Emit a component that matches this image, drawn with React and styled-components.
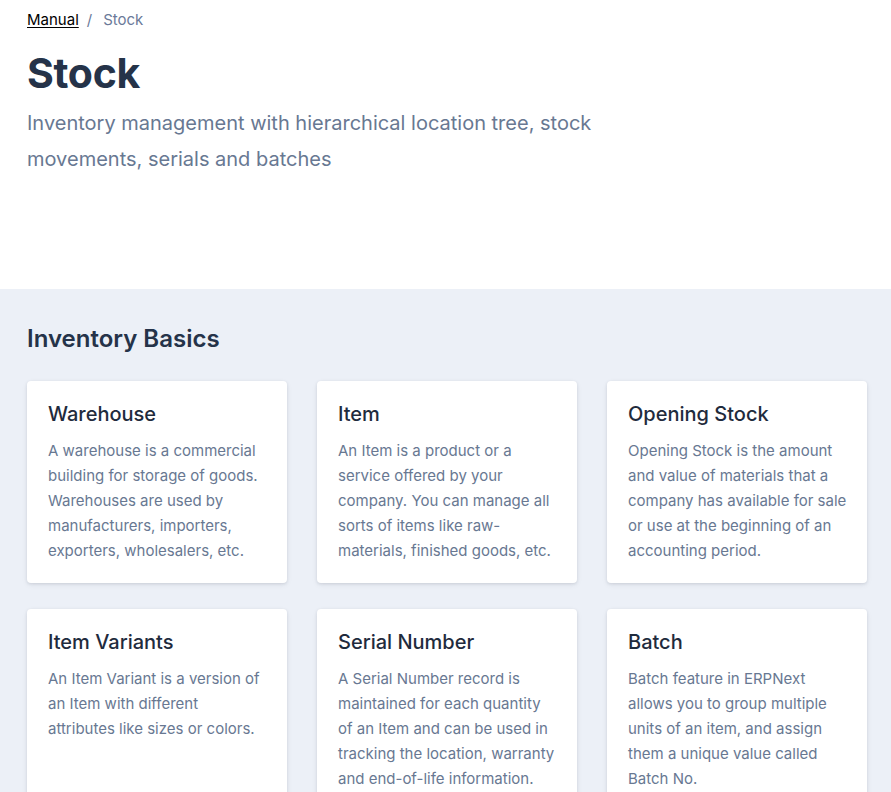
import React from "react";
import styled, { createGlobalStyle } from "styled-components";

const GlobalStyle = createGlobalStyle`
    body {
        margin: 0;
        background: #ffffff;
        font-family: Inter, "Noto Sans", sans-serif;
        -webkit-font-smoothing: antialiased;
    }
`;

const Hero = styled.header`
    padding: 9px 27px 112px;
    background: #ffffff;
`;

const Breadcrumb = styled.nav`
    display: flex;
    align-items: center;
    font-size: 15px;
    line-height: 22px;
    color: #6b7a99;
`;

const CrumbLink = styled.a`
    color: #000000;
    text-decoration: underline;
    text-underline-offset: 2px;
`;

const Separator = styled.span`
    margin: 0 11px 0 8px;
`;

const Title = styled.h1`
    margin: 18px 0 8px;
    font-size: 41px;
    line-height: 48px;
    font-weight: 700;
    color: #253349;
    letter-spacing: -0.3px;
`;

const Subtitle = styled.p`
    margin: 0;
    max-width: 600px;
    font-size: 20px;
    line-height: 36px;
    color: #687892;
`;

const Section = styled.section`
    background: #ecf0f7;
    padding: 34px 24px 40px 27px;
`;

const SectionTitle = styled.h2`
    margin: 0 0 26px;
    font-size: 24px;
    line-height: 32px;
    font-weight: 600;
    color: #253349;
`;

const Grid = styled.div`
    display: grid;
    grid-template-columns: repeat(3, 260px);
    column-gap: 30px;
    row-gap: 26px;
`;

const Card = styled.article`
    background: #ffffff;
    border-radius: 4px;
    padding: 20px 20px 20px 21px;
    box-shadow: 0 1px 3px rgba(31, 45, 61, 0.12), 0 2px 6px rgba(31, 45, 61, 0.06);
    min-height: 162px;
`;

const CardTitle = styled.h3`
    margin: 0 0 11px;
    font-size: 20px;
    line-height: 26px;
    font-weight: 500;
    color: #1f2b3d;
`;

const CardText = styled.p`
    margin: 0;
    font-size: 15px;
    line-height: 25px;
    color: #687892;
`;

const cards = [
    {
        title: "Warehouse",
        text: "A warehouse is a commercial building for storage of goods. Warehouses are used by manufacturers, importers, exporters, wholesalers, etc.",
    },
    {
        title: "Item",
        text: "An Item is a product or a service offered by your company. You can manage all sorts of items like raw-materials, finished goods, etc.",
    },
    {
        title: "Opening Stock",
        text: "Opening Stock is the amount and value of materials that a company has available for sale or use at the beginning of an accounting period.",
    },
    {
        title: "Item Variants",
        text: "An Item Variant is a version of an Item with different attributes like sizes or colors.",
    },
    {
        title: "Serial Number",
        text: "A Serial Number record is maintained for each quantity of an Item and can be used in tracking the location, warranty and end-of-life information.",
    },
    {
        title: "Batch",
        text: "Batch feature in ERPNext allows you to group multiple units of an item, and assign them a unique value called Batch No.",
    },
];

export default function App() {
    return (
        <>
            <GlobalStyle />
            <Hero>
                <Breadcrumb>
                    <CrumbLink href="#">Manual</CrumbLink>
                    <Separator>/</Separator>
                    <span>Stock</span>
                </Breadcrumb>
                <Title>Stock</Title>
                <Subtitle>
                    Inventory management with hierarchical location tree, stock movements, serials and batches
                </Subtitle>
            </Hero>
            <Section>
                <SectionTitle>Inventory Basics</SectionTitle>
                <Grid>
                    {cards.map((card) => (
                        <Card key={card.title}>
                            <CardTitle>{card.title}</CardTitle>
                            <CardText>{card.text}</CardText>
                        </Card>
                    ))}
                </Grid>
            </Section>
        </>
    );
}
